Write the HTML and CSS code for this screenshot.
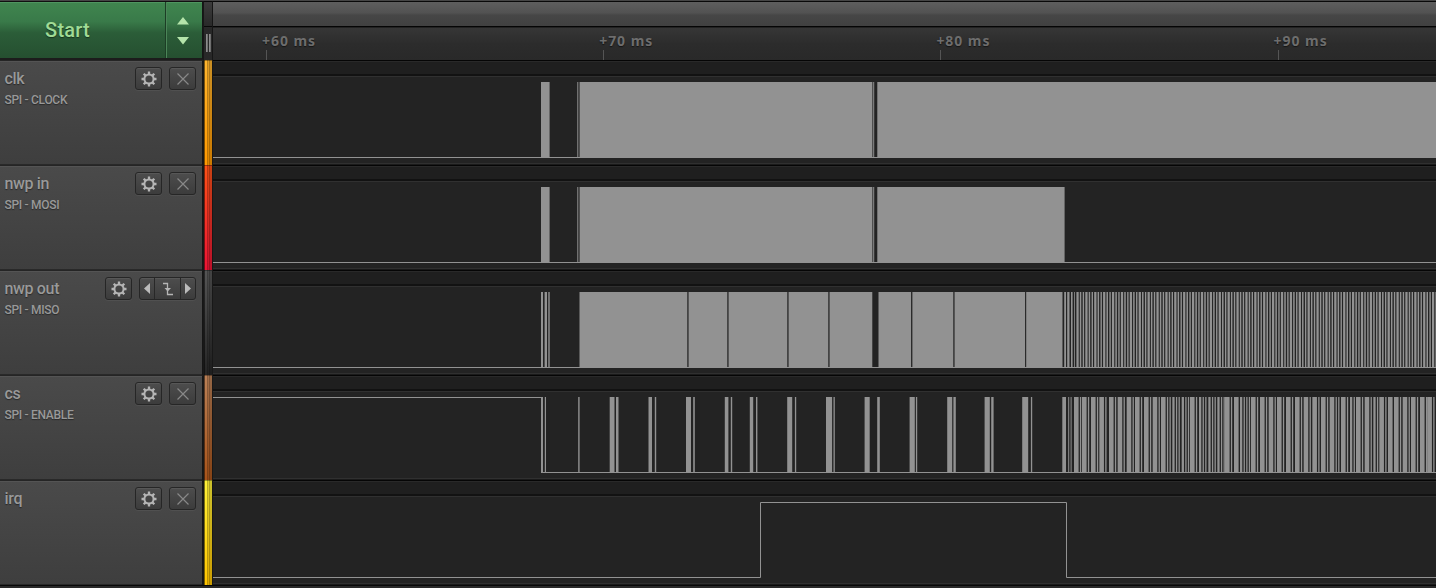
FILE: index.html
```html
<!DOCTYPE html>
<html lang="en">
<head>
<meta charset="utf-8">
<title>Logic analyzer</title>
<link rel="stylesheet" href="styles.css">
</head>
<body>
<svg class="defs" width="0" height="0" aria-hidden="true">
  <symbol id="gear" viewBox="-8 -8 16 16">
    <circle r="4.6" fill="none" stroke="currentColor" stroke-width="2"/>
    <path d="M0-5V-7.5M0 5V7.5M-5 0H-7.5M5 0H7.5M-3.6-3.6L-5.3-5.3M3.6-3.6L5.3-5.3M-3.6 3.6L-5.3 5.3M3.6 3.6L5.3 5.3" stroke="currentColor" stroke-width="2.3"/>
  </symbol>
  <symbol id="cross" viewBox="0 0 12 12">
    <path d="M.5.5L11.5 11.5M11.5.5L.5 11.5" stroke="currentColor" stroke-width="1.2"/>
  </symbol>
  <symbol id="edge" viewBox="0 0 12 14">
    <path d="M1 1.5H5.5V12.5H11" fill="none" stroke="currentColor" stroke-width="1.3"/>
    <path d="M2.5 6H9L5.7 9.5Z" fill="currentColor"/>
  </symbol>
</svg>
<main class="app">
  <header class="top">
    <div class="start">
      <button class="start-main">Start</button>
      <button class="start-more">
        <svg width="12" height="28"><path d="M0 7.5L6 0L12 7.5ZM0 20H12L6 27.5Z" fill="#b4e4aa"/></svg>
      </button>
    </div>
    <div class="handle"><div class="handle-top"></div><div class="handle-grip"><i></i><i></i></div></div>
    <div class="time">
      <div class="scroll"></div>
      <div class="ruler"><span class="tick">+60 ms</span><span class="tick">+70 ms</span><span class="tick">+80 ms</span><span class="tick last">+90 ms</span></div>
    </div>
  </header>
  <section class="row">
    <div class="panel"><div class="names"><b>clk</b><small>SPI - CLOCK</small></div><div class="tools"><button><svg class="gear"><use href="#gear"/></svg></button><button><svg class="cross"><use href="#cross"/></svg></button></div></div>
    <div class="strip orange"></div><div class="plot"><svg id="clk"></svg></div>
  </section>
  <section class="row">
    <div class="panel"><div class="names"><b>nwp in</b><small>SPI - MOSI</small></div><div class="tools"><button><svg class="gear"><use href="#gear"/></svg></button><button><svg class="cross"><use href="#cross"/></svg></button></div></div>
    <div class="strip red"></div><div class="plot"><svg id="mosi"></svg></div>
  </section>
  <section class="row">
    <div class="panel"><div class="names"><b>nwp out</b><small>SPI - MISO</small></div><div class="tools"><button><svg class="gear"><use href="#gear"/></svg></button><div class="group"><span class="side"><svg width="6" height="11"><path d="M6 0V11L0 5.5Z" fill="#bbb"/></svg></span><span class="mid"><svg class="edge"><use href="#edge"/></svg></span><span class="side"><svg width="6" height="11"><path d="M0 0V11L6 5.5Z" fill="#bbb"/></svg></span></div></div></div>
    <div class="strip black"></div><div class="plot"><svg id="miso"></svg></div>
  </section>
  <section class="row">
    <div class="panel"><div class="names"><b>cs</b><small>SPI - ENABLE</small></div><div class="tools"><button><svg class="gear"><use href="#gear"/></svg></button><button><svg class="cross"><use href="#cross"/></svg></button></div></div>
    <div class="strip brown"></div><div class="plot"><svg id="cs"></svg></div>
  </section>
  <section class="row">
    <div class="panel"><div class="names"><b>irq</b></div><div class="tools"><button><svg class="gear"><use href="#gear"/></svg></button><button><svg class="cross"><use href="#cross"/></svg></button></div></div>
    <div class="strip yellow"></div><div class="plot"><svg id="irq"></svg></div>
  </section>
</main>
<script src="waves.js"></script>
</body>
</html>
```
FILE: styles.css
```css
* { box-sizing: border-box; }
body { margin: 0; background: #292929; overflow: hidden; font-family: Roboto, sans-serif; }
button { font: inherit; margin: 0; padding: 0; border: 0; }
svg { display: block; }
.defs { position: absolute; }
.app { width: 1436px; height: 588px; background: #292929; overflow: hidden; }
.top { display: flex; height: 60px; border-top: 1px solid #454545; }
.start { display: flex; flex: none; width: 203px; height: 59px; border-top: 1px solid #101010; border-bottom: 2px solid #1c1c1c; border-right: 1px solid #151515; }
.start button { background: linear-gradient(#40854f 0, #397a49 35%, #2b5d38 55%, #254f30 100%); box-shadow: inset 0 1px #4f9560; }
.start-main { width: 166px; padding-right: 30px !important; border-right: 1px solid #1c3d25 !important; color: #a0db95; font-size: 20px !important; font-weight: 500 !important; letter-spacing: .2px; text-shadow: 0 1px 1px #17351d; }
.start-more { flex: 1; display: flex; align-items: center; justify-content: center; padding: 2px 3px 0 0 !important; border-left: 1px solid #4b8558 !important; }
.handle { flex: none; width: 10px; background: #282828; border-left: 1px solid #181818; border-right: 1px solid #161616; border-top: 1px solid #090909; }
.handle-top { height: 25px; border-bottom: 1px solid #090909; background: linear-gradient(#3c3c3c, #292929); }
.handle-grip { height: 33px; display: flex; justify-content: center; align-items: center; gap: 1px; padding-bottom: 2px; }
.handle-grip i { width: 2px; height: 18px; background: linear-gradient(90deg, #9a9a9a, #606060); }
.time { flex: 1; min-width: 0; border-top: 1px solid #090909; }
.scroll { height: 25px; border-bottom: 1px solid #050505; background: linear-gradient(#5e5e5e, #525252 45%, #464646 55%, #414141); }
.ruler { height: 33px; display: flex; padding-left: 49px; background: linear-gradient(#363636, #2c2c2c 50%, #292929); border-top: 1px solid #222; }
.tick { flex: none; width: 337.2px; height: 32px; padding-top: 3px; font: 700 14px/19px "Noto Sans", sans-serif; letter-spacing: .95px; color: #6d6d6d; text-shadow: 0 1px 1px #151515; background: linear-gradient(#555, #555) 4px 22px / 1px 10px no-repeat; }
.tick.last { flex: 1; width: auto; }
.row { display: flex; height: 105px; }
.panel { flex: none; width: 203px; display: flex; justify-content: space-between; padding: 6px 7px 0 4.5px; background: linear-gradient(#4a4a4a, #3e3e3e); border-top: 1px solid #252525; border-right: 1px solid #151515; box-shadow: inset 0 1px #545454, inset 0 -1px #292929; }
.names { display: flex; flex-direction: column; color: #999; text-shadow: 0 1px 1px #292929; white-space: nowrap; }
.names b { font-size: 16px; line-height: 24px; font-weight: 500; letter-spacing: -.35px; }
.names small { font-size: 12px; line-height: 18px; font-weight: 500; letter-spacing: -.3px; }
.tools { display: flex; gap: 7px; margin-right: -1px; }
.tools button, .group { width: 27px; height: 23px; display: flex; align-items: center; justify-content: center; border: 1px solid #262626; border-radius: 3px; background: linear-gradient(#4d4d4d, #3c3c3c); box-shadow: inset 0 1px #575757, 0 1px #505050; }
.tools .group { width: 57px; align-items: stretch; }
.side { flex: 1; display: flex; align-items: center; justify-content: center; }
.mid { width: 27px; display: flex; align-items: center; justify-content: center; border: solid #282828; border-width: 0 1px; }
.gear { width: 16px; height: 16px; color: #b5b5b5; }
.cross { width: 12px; height: 12px; color: #888; }
.edge { width: 12px; height: 14px; color: #b5b5b5; }
.strip { flex: none; width: 10px; border: solid #181818; border-width: 0 1px; box-shadow: inset 0 1px #0005; background: linear-gradient(90deg, #0008 0 1px, #0000 1px 3px, #0004 3px 4px, #0002 4px 5px, #0005 5px 6px, #0003 6px 8px), linear-gradient(var(--a), var(--b)); }
.orange { --a: #ffb52e; --b: #ff9900; }
.red { --a: #fd5217; --b: #ec1435; }
.black { --a: #555; --b: #252525; }
.brown { --a: #ba8056; --b: #a9541a; }
.yellow { --a: #fff238; --b: #ffc400; }
.plot { flex: 1; min-width: 0; height: 105px; padding-top: 17px; background: linear-gradient(#050505 0 1px, #292929 1px 2px, #1f1f1f 2px 14px, #121212 14px 16px, #303030 16px 17px, #232323 17px 103px, #303030 103px 104px, #1a1a1a 104px); }
.plot svg { width: 1223px; height: 84px; }
.row:last-child { border-bottom: 1px solid #080808; height: 106px; }
```
FILE: waves.js
```js
const COLOR = '#929292';
const LEFT = 213;
const TOP = 5;
const BOTTOM = 81;

// Bars are [start, end] pairs in timeline coordinates.
function draw(id, bars, line, gaps = []) {
  const bar = ([a, b]) => `M${a} ${TOP}H${b}V${BOTTOM}H${a}Z`;
  const svg = document.getElementById(id);
  svg.setAttribute('viewBox', `${LEFT} 0 1223 84`);
  svg.innerHTML =
    `<path fill="${COLOR}" d="${bars.map(bar).join('')}"/>` +
    gaps.map(([x, w, c]) => `<path fill="${c}" d="M${x} ${TOP}h${w}V80h${-w}z"/>`).join('') +
    `<path fill="none" stroke="${COLOR}" d="${line}"/>`;
}

const low = 'M213 80.5H1436';
const lead = [[541, 549.6], [577.3, 578.3], [579.6, 872.4], [873.2, 874.2]];
draw('clk', [...lead, [877.3, 1436]], low);
draw('mosi', [...lead, [877.3, 1064.6]], low);

const dense = [[1064.2, 1066], [1067.2, 1069.5], [1071, 1072.6], [1074, 1074.8]];
for (let x = 1076.4; x < 1436; x += 8.89) {
  dense.push([x, x + 2.3], [x + 3.4, x + 4.9], [x + 6.3, x + 7.7]);
}
draw('miso', [[541, 543], [544.6, 547], [548.3, 549.7], [579.5, 872.3], [878.5, 1062.5], ...dense], low,
  [[687, 1.8, '#444'], [727, 1.8, '#444'], [787, 1.8, '#444'], [828, 1.8, '#444'], [911, 1.4, '#2b2b2b'], [953, 1.8, '#444'], [1025, 1.2, '#2b2b2b']]);

const enable = [[541, 543], [544.8, 546], [578.2, 579.6],
  [609.7, 614.5], [616, 618.5], [648.5, 652], [654.8, 656.2], [686, 691], [693.2, 694.8],
  [724.8, 728.4], [730.8, 732.2], [749.8, 753.2], [756, 757.4], [787.2, 792.2], [794.9, 796.2],
  [826, 832.1], [833.5, 834.8], [864.6, 869.7], [877.2, 879.8], [909.6, 914.8], [915.9, 917.2],
  [947.2, 952.2], [953.4, 955.8], [984.6, 989.8], [991.2, 993.6], [1022.2, 1028.2], [1030.9, 1032.2],
  [1062.3, 1066], [1068.2, 1069.2], [1070.6, 1071.6]];
const wide = [57, 81, 108, 133, 162, 188, 215, 240, 267, 293, 318, 352, 380, 405, 432, 460, 487, 510, 537]
  .map(p => 1055 + p / 3)
  .concat([0, 33, 60, 86, 111, 138, 165, 191, 217, 243, 269, 303, 330, 348, 374, 400, 418, 444, 462, 488, 513, 540, 562]
    .map(p => 1240 + p / 3));
const narrow = new Set([11, 12, 14, 15, 16, 19, 31, 34]);
wide.forEach((x, i) => {
  const end = x + (narrow.has(i) ? 2.3 : 4.6);
  enable.push([x, end]);
  const next = wide[i + 1] || 1436;
  for (let p = end + 1.3; p < next - 1.4; p += 2.6) enable.push([p, p + 1.3]);
});
draw('cs', enable, 'M213 5.5H541.5V80.5H1436');
draw('irq', [], 'M213 80.5H760.5V5.5H1066.5V80.5H1436');
```
